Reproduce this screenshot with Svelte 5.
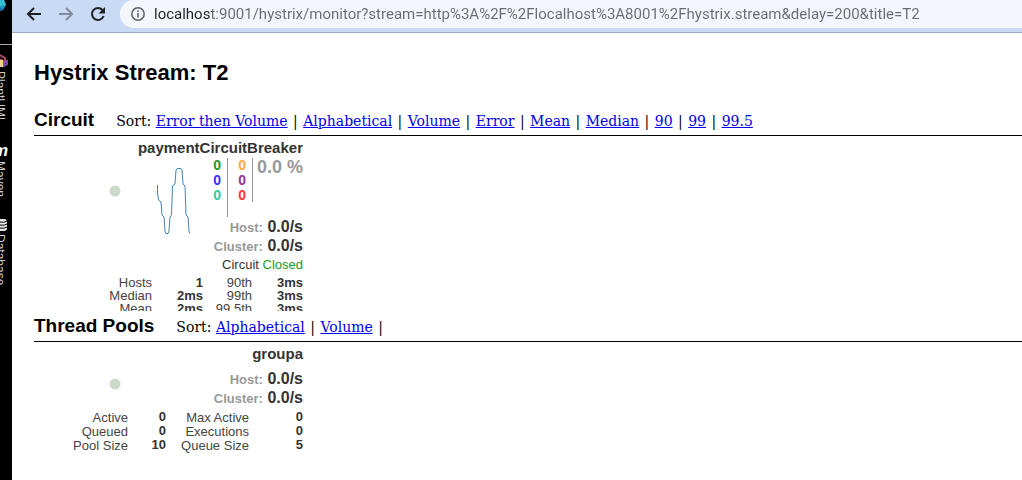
<script>
  const url = 'localhost:9001/hystrix/monitor?stream=http%3A%2F%2Flocalhost%3A8001%2Fhystrix.stream&delay=200&title=T2';
  const circuitSorts = ['Error then Volume', 'Alphabetical', 'Volume', 'Error', 'Mean', 'Median', '90', '99', '99.5'];
  const poolSorts = ['Alphabetical', 'Volume'];
  const latencies = [
    ['Hosts', '1', '90th', '3ms'],
    ['Median', '2ms', '99th', '3ms'],
    ['Mean', '2ms', '99.5th', '3ms']
  ];
  const pools = [
    ['Active', '0', 'Max Active', '0'],
    ['Queued', '0', 'Executions', '0'],
    ['Pool Size', '10', 'Queue Size', '5']
  ];
</script>

{#snippet rates()}
  <p class="rate"><span>Host:</span> <b>0.0/s</b></p>
  <p class="rate"><span>Cluster:</span> <b>0.0/s</b></p>
{/snippet}

<div class="window">
  <aside class="tools">
    <div class="tool first">
      <svg width="12" height="44" viewBox="0 0 12 44" aria-hidden="true">
        <path d="M0 0H4L6 5 3 10 0 11z" fill="#2499c8" />
        <path d="M0 0H4L6 5 0 6z" fill="#39bdd2" />
        <path d="M3 10 0 11V7z" fill="#1763a6" />
      </svg>
    </div>
    <button class="tool plant">
      <svg width="12" height="16" viewBox="0 0 12 16" aria-hidden="true">
        <path d="M0 2 5 5v4L0 6" fill="none" stroke="#a84b63" stroke-width="2" />
        <path d="M0 7h3v7H0z" fill="#f1d687" />
        <path d="M4 8v5l3-2V7" fill="none" stroke="#7c4fa0" stroke-width="2" />
      </svg>
      <span>PlantUML</span>
    </button>
    <button class="tool maven"><i>m</i><span>Maven</span></button>
    <button class="tool data">
      <svg width="12" height="14" viewBox="0 0 12 14" aria-hidden="true">
        <path d="M0 1h4q3 0 3 3v6q0 3-3 3H0z" fill="#e8e8e8" />
        <path d="M0 4q4 1 7-1M0 7q4 1 7-1M0 10q4 1 7-1" fill="none" stroke="#000" />
      </svg>
      <span>Database</span>
    </button>
  </aside>

  <div class="browser">
    <header>
      <button aria-label="Back">
        <svg width="16" height="16" viewBox="0 0 16 16"><path d="M15 8H2M8 2 2 8l6 6" fill="none" stroke="#202124" stroke-width="2" /></svg>
      </button>
      <button aria-label="Forward" disabled>
        <svg width="16" height="16" viewBox="0 0 16 16"><path d="M1 8h13M8 2l6 6-6 6" fill="none" stroke="#858b98" stroke-width="2" /></svg>
      </button>
      <button aria-label="Reload">
        <svg width="16" height="16" viewBox="0 0 16 16"><path d="M13.6 10A6 6 0 1 1 12.5 4L14 5.6" fill="none" stroke="#202124" stroke-width="2" /><path d="M15 1v6.500H8.500z" fill="#202124" /></svg>
      </button>
      <div class="address">
        <svg width="16" height="16" viewBox="0 0 16 16" aria-hidden="true"><circle cx="8" cy="8" r="6.200" fill="none" stroke="#5f6368" stroke-width="1.500" /><path d="M8 7v4.500M8 4.300v1.700" stroke="#5f6368" stroke-width="1.600" /></svg>
        <input aria-label="Address" value={url} spellcheck="false" />
      </div>
    </header>

    <main>
      <h1>Hystrix Stream: T2</h1>

      <section id="circuit">
        <div class="bar">
          <h2>Circuit</h2>
          <nav>Sort: {#each circuitSorts as s, i}{#if i}{' '}<span>|</span>{' '}{/if}<a href="#circuit">{s}</a>{/each}</nav>
        </div>
        <article class="card clipped">
          <h3>paymentCircuitBreaker</h3>
          <div class="body">
            <svg width="155" height="80" viewBox="0 0 155 80" aria-hidden="true">
              <circle cx="81" cy="33" r="5.500" fill="#ccdacc" />
              <path d="M123.500 27V35L124.500 42 127 44 128 57 130 59 131 73 132 75.500H134L135 73 136 59 137.500 57 138.500 28 141 26 142 12 143 10.500H147L148 12 149 26 151 28 152 57 154 59 155 73 156 75.500" fill="none" stroke="steelblue" />
            </svg>
            <div class="stats">
              <div class="counters">
                <div class="count long">
                  <span class="green">0</span><span class="blue">0</span><span class="teal">0</span>
                </div>
                <div class="count">
                  <span class="orange">0</span><span class="purple">0</span><span class="red">0</span>
                </div>
                <strong>0.0 %</strong>
              </div>
              {@render rates()}
            </div>
          </div>
          <p class="status">Circuit <span>Closed</span></p>
          <table class="latency">
            <tbody>
              {#each latencies as [a, b, c, d]}
                <tr><th scope="row">{a}</th><td>{b}</td><th scope="row">{c}</th><td>{d}</td></tr>
              {/each}
            </tbody>
          </table>
        </article>
      </section>

      <section id="pools">
        <div class="bar">
          <h2>Thread Pools</h2>
          <nav>Sort: {#each poolSorts as s}<a href="#pools">{s}</a>{' '}<span>|</span>{' '}{/each}</nav>
        </div>
        <article class="card">
          <h3>groupa</h3>
          <div class="body pool">
            <svg width="155" height="36" viewBox="0 0 155 36" aria-hidden="true">
              <circle cx="81" cy="14" r="5.500" fill="#ccdacc" />
            </svg>
            <div class="stats">{@render rates()}</div>
          </div>
          <table class="threads">
            <tbody>
              {#each pools as [a, b, c, d]}
                <tr><th scope="row">{a}</th><td>{b}</td><th scope="row">{c}</th><td>{d}</td></tr>
              {/each}
            </tbody>
          </table>
        </article>
      </section>
    </main>
  </div>
</div>

<style>
  :global(body) { margin: 0; background: #fff; }
  h1, h2, h3, p { margin: 0; }
  button { border: 0; padding: 0; background: none; display: flex; align-items: center; }
  svg { display: block; flex: none; }
  .window { display: flex; min-height: 100vh; font-family: "Liberation Sans", Arial, sans-serif; }
  .tools { width: 12px; flex: none; overflow: hidden; background: #000; color: #ccc; }
  .tool { flex-direction: column; align-items: flex-start; width: 12px; }
  .tool span { writing-mode: vertical-rl; font: 12px/14px "Liberation Sans", sans-serif; color: #ccc; margin-left: -7px; white-space: nowrap; }
  .first { border-bottom: 1px solid #aaa; margin-bottom: 8px; }
  .plant { gap: 2px; height: 90px; }
  .maven i { font: italic bold 17px/16px "Liberation Sans", sans-serif; color: #fff; margin-left: -7px; }
  .maven { gap: 2px; height: 75px; }
  .data { gap: 2px; }

  .browser { flex: 1; min-width: 0; }
  header { display: flex; align-items: center; gap: 16px; height: 28px; padding: 0 0 4px 14px; background: #c9daf5; border-bottom: 1px solid #99a9c7; }
  .address { flex: 1; min-width: 0; display: flex; align-items: center; gap: 8px; height: 28px; margin-left: -2px; padding-left: 10px; background: #f3f7fd; border-radius: 14px 0 0 14px; }
  input { flex: 1; min-width: 0; border: 0; padding: 0; outline: 0; font: 15px/20px Roboto, "Segoe UI", sans-serif; color: transparent; background: linear-gradient(90deg, #202124 58px, #686c72 58px); background-clip: text; -webkit-background-clip: text; }

  main { padding: 26px 0 0 22px; color: #000; }
  h1 { font-size: 22px; line-height: 28px; margin-bottom: 18px; }
  .bar { display: flex; align-items: baseline; gap: 22px; height: 30px; border-bottom: 1px solid #000; white-space: nowrap; }
  h2 { font-size: 19px; line-height: 30px; }
  nav { font: 14px/20px "DejaVu Serif", serif; }
  nav span { margin: 0 1px; }
  a { color: #00e; }
  .card { width: 269px; padding-top: 3px; color: #333; }
  .clipped { height: 172px; overflow: hidden; }
  h3 { font-size: 15px; line-height: 18px; text-align: right; }
  .body { display: flex; padding-top: 1px; }
  .body > svg { overflow: visible; }
  .body.pool { padding-top: 7px; }
  .stats { flex: 1; }
  .counters { display: flex; height: 60px; }
  .count { display: flex; flex-direction: column; width: 25px; height: 44px; padding-right: 6px; box-sizing: border-box; border-right: 1px solid #999; font: bold 14px/15px "Liberation Sans", sans-serif; text-align: right; }
  .count.long { width: 39px; height: 59px; }
  .green { color: #292; }
  .blue { color: #33f; }
  .teal { color: #2dcaa0; }
  .orange { color: #fa3; }
  .purple { color: #939; }
  .red { color: #f33; }
  strong { flex: 1; text-align: right; font-size: 18px; line-height: 18px; color: #999; }
  .rate { text-align: right; font-size: 16px; line-height: 18px; }
  .rate span { font-size: 13px; font-weight: bold; color: #999; }
  .status { text-align: right; font-size: 13px; line-height: 18px; }
  .status span { color: #292; }
  table { width: 100%; table-layout: fixed; border-collapse: collapse; font-size: 13px; line-height: 13px; margin-top: 2px; }
  th, td { padding: 0; text-align: right; white-space: nowrap; }
  th { font-weight: normal; color: #444; }
  td { font-weight: bold; }
  .threads td { line-height: 14px; }
  th:first-child { width: 118px; }
  td:nth-child(2) { width: 51px; }
  th:nth-child(3) { width: 49px; }
  .threads th:first-child { width: 94px; }
  .threads td:nth-child(2) { width: 38px; }
  .threads th:nth-child(3) { width: 83px; }
</style>
